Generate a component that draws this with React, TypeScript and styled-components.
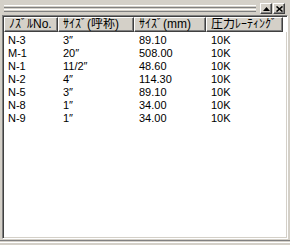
import React from 'react'
import styled, { createGlobalStyle } from 'styled-components'

const GlobalStyle = createGlobalStyle`
  html, body {
    margin: 0;
    padding: 0;
    background: #d4d0c8;
  }
`

const FONT = `"Liberation Sans", "Noto Sans CJK JP", sans-serif`

// classic win9x face colours
const FACE = '#d4d0c8'
const SHADOW = '#808080'
const DARK = '#404040'

const Window = styled.div`
  width: 290px;
  height: 245px;
  background: ${FACE};
  display: flex;
  flex-direction: column;
  font-family: ${FONT};
  color: #000;
  overflow: hidden;
`

const TitleBar = styled.div`
  height: 15px;
  display: flex;
  align-items: flex-start;
  padding: 0 5px 0 4px;
  box-sizing: border-box;
`

const Gripper = styled.div`
  flex: 1;
  display: flex;
  flex-direction: column;
  gap: 1px;
  margin: 5px 3px 0 0;
`

const Ridge = styled.div`
  height: 1px;
  border-top: 1px solid #fff;
  border-bottom: 1px solid ${SHADOW};
`

const CaptionButton = styled.div`
  width: 12px;
  height: 11px;
  margin-top: 3px;
  margin-left: 1px;
  box-sizing: border-box;
  background: ${FACE};
  border: 1px solid;
  border-color: #fff ${DARK} ${DARK} #fff;
  box-shadow: inset -1px -1px ${SHADOW};
  display: flex;
  align-items: center;
  justify-content: center;

  svg {
    display: block;
  }
`

const ListBox = styled.div`
  flex: 1;
  margin: 0 2px 0 2px;
  background: #fff;
  border: 1px solid;
  border-color: ${SHADOW} #fff #fff ${SHADOW};
  box-shadow: inset 1px 1px ${DARK}, inset -1px -1px ${FACE};
  padding: 1px;
  display: flex;
  flex-direction: column;
`

const BottomRule = styled.div`
  height: 1px;
  border-top: 1px solid ${SHADOW};
  border-bottom: 1px solid #fff;
  margin: 1px 0 2px;
`

const COLS = '54px 76px 72px 77px 1fr'

const Header = styled.div`
  display: grid;
  grid-template-columns: ${COLS};
  height: 15px;
`

const HeaderCell = styled.div<{ $filler?: boolean }>`
  box-sizing: border-box;
  background: ${p => (p.$filler ? '#fff' : FACE)};
  border: ${p => (p.$filler ? 'none' : '1px solid')};
  border-color: #fff ${DARK} ${DARK} #fff;
  box-shadow: ${p => (p.$filler ? 'none' : `inset -1px -1px ${SHADOW}`)};
  font-size: 12px;
  line-height: 13px;
  padding-left: 4px;
  white-space: nowrap;
  overflow: hidden;
`

const Rows = styled.div`
  display: flex;
  flex-direction: column;
  padding-top: 2px;
`

const Row = styled.div`
  display: grid;
  grid-template-columns: ${COLS};
  height: 13px;
  font-size: 11px;
  line-height: 13px;
`

const Cell = styled.div<{ $first?: boolean }>`
  padding-left: ${p => (p.$first ? 4 : 5)}px;
  white-space: nowrap;
`

const nozzles = [
  ['N-3', '3″', '89.10', '10K'],
  ['M-1', '20″', '508.00', '10K'],
  ['N-1', '11/2″', '48.60', '10K'],
  ['N-2', '4″', '114.30', '10K'],
  ['N-5', '3″', '89.10', '10K'],
  ['N-8', '1″', '34.00', '10K'],
  ['N-9', '1″', '34.00', '10K'],
]

const headers = ['ﾉｽﾞﾙNo.', 'ｻｲｽﾞ(呼称)', 'ｻｲｽﾞ(mm)', '圧力ﾚｰﾃｨﾝｸﾞ']

export default function App() {
  return (
    <>
      <GlobalStyle />
      <Window>
        <TitleBar>
          <Gripper>
            <Ridge />
            <Ridge />
          </Gripper>
          <CaptionButton>
            <svg width="7" height="4" viewBox="0 0 7 4">
              <path d="M3.5 0 L7 4 L0 4 Z" fill="#000" />
            </svg>
          </CaptionButton>
          <CaptionButton>
            <svg width="7" height="6" viewBox="0 0 7 6">
              <path d="M0.5 0.5 L6.5 5.5 M6.5 0.5 L0.5 5.5" stroke="#000" strokeWidth="1.6" />
            </svg>
          </CaptionButton>
        </TitleBar>
        <ListBox>
          <Header>
            {headers.map(h => (
              <HeaderCell key={h}>{h}</HeaderCell>
            ))}
            <HeaderCell $filler />
          </Header>
          <Rows>
            {nozzles.map(r => (
              <Row key={r[0]}>
                {r.map((v, i) => (
                  <Cell key={i} $first={i === 0}>
                    {v}
                  </Cell>
                ))}
              </Row>
            ))}
          </Rows>
        </ListBox>
        <BottomRule />
      </Window>
    </>
  )
}
